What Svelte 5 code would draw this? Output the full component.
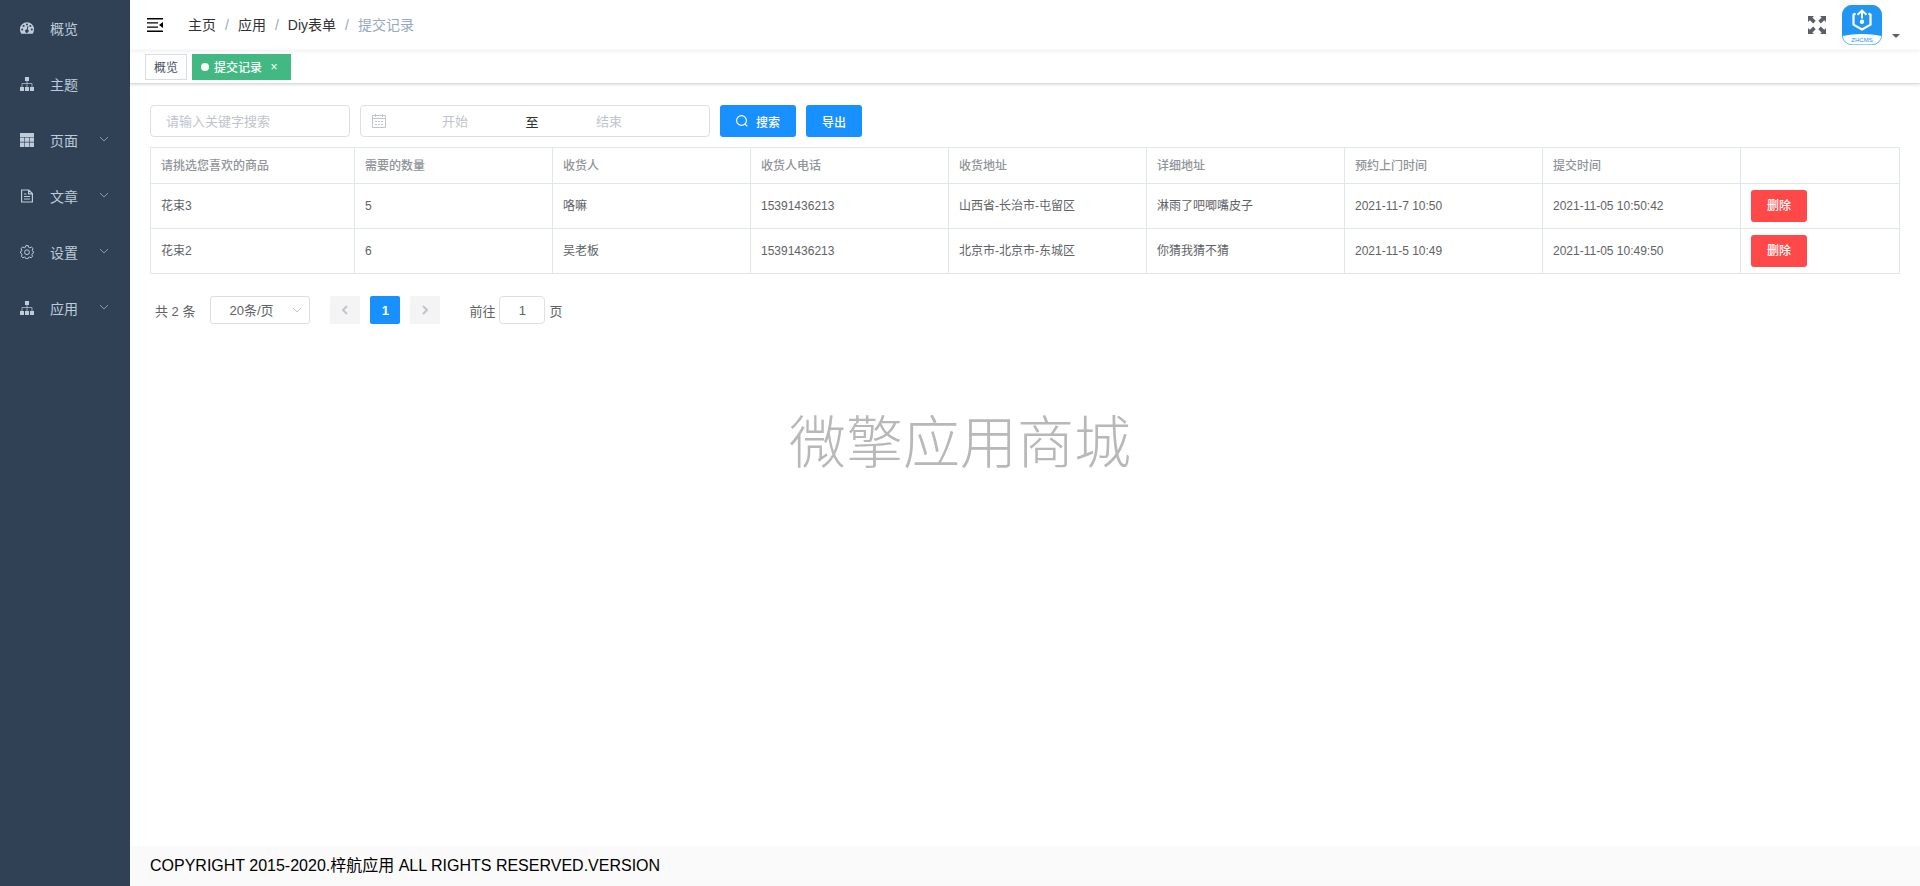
<script>
  let menus = [
    { name: "概览", icon: "dashboard", sub: false },
    { name: "主题", icon: "tree", sub: false },
    { name: "页面", icon: "grid", sub: true },
    { name: "文章", icon: "doc", sub: true },
    { name: "设置", icon: "gear", sub: true },
    { name: "应用", icon: "tree", sub: true }
  ];

  let crumbs = ["主页", "应用", "Diy表单"];

  let columns = [
    "请挑选您喜欢的商品",
    "需要的数量",
    "收货人",
    "收货人电话",
    "收货地址",
    "详细地址",
    "预约上门时间",
    "提交时间"
  ];

  let rows = [
    ["花束3", "5", "咯嘛", "15391436213", "山西省-长治市-屯留区", "淋雨了吧唧嘴皮子", "2021-11-7 10:50", "2021-11-05 10:50:42"],
    ["花束2", "6", "吴老板", "15391436213", "北京市-北京市-东城区", "你猜我猜不猜", "2021-11-5 10:49", "2021-11-05 10:49:50"]
  ];

  let keyword = "";
  let start = "";
  let end = "";
  let pageSize = "20";
  let page = "1";

  const remove = i => {
    rows = rows.filter((_, index) => index !== i);
  };
</script>

<div class="app">
  <aside class="sidebar">
    <nav>
      <ul>
        {#each menus as menu}
          <li>
            <a href="#/">
              <svg class="menu-icon" viewBox="0 0 14 14" aria-hidden="true">
                {#if menu.icon === "dashboard"}
                  <path fill="currentColor" d="M7 1.200a7 7 0 0 0-7 7c0 1.600.5 3 1.200 4.200.2.2.4.4.7.4h10.200c.3 0 .5-.2.7-.4A7.600 7.600 0 0 0 14 8.200a7 7 0 0 0-7-7z" />
                  <g fill="#304156">
                    <circle cx="7" cy="3.500" r="1" />
                    <circle cx="3.600" cy="5" r="1" />
                    <circle cx="10.400" cy="5" r="1" />
                    <circle cx="2.200" cy="8.400" r="1" />
                    <circle cx="11.800" cy="8.400" r="1" />
                    <path d="M7.500 5l.9.300-.7 3.300a1.700 1.700 0 1 1-1-.2z" />
                  </g>
                {:else if menu.icon === "tree"}
                  <path fill="currentColor" d="M5 0h4v4H5zM0 10h4v4H0zM5 10h4v4H5zM10 10h4v4h-4z" />
                  <path fill="none" stroke="currentColor" stroke-opacity=".7" d="M7 4v6M2 10V6.500h10V10" />
                {:else if menu.icon === "grid"}
                  <path fill="currentColor" d="M0 0h14v4H0zM0 4.600h4.400v4.200H0zM5 4.600h4v4.200H5zM9.600 4.600H14v4.200H9.600zM0 9.400h4.400V14H0zM5 9.400h4V14H5zM9.600 9.400H14V14H9.600z" />
                {:else if menu.icon === "doc"}
                  <path fill="none" stroke="currentColor" stroke-width="1.200" d="M1.600 1h7.200l3.600 3.600V13H1.600zM8.600 1v3.800h3.800M4 7.500h6M4 10h6M4 5h2.500" />
                {:else}
                  <path fill="none" stroke="currentColor" d="M5.800.6h2.400l.4 1.700 1.300.6 1.500-.9 1.700 1.700-.9 1.500.3 1 .9.300v1.600l-1.100.5-.5 1.300.8 1.300-1.500 1.600-1.600-.8-1 .4-.4 1.300H5.800l-.4-1.300-1-.4-1.600.8-1.500-1.600.8-1.300-.5-1.300-1-.5V6.500l.9-.3.300-1-.9-1.500L2.600 2l1.500.9 1.300-.6z" />
                  <circle cx="7" cy="7.200" r="2.400" fill="none" stroke="currentColor" />
                {/if}
              </svg>
              <span>{menu.name}</span>
              {#if menu.sub}
                <svg class="arrow" viewBox="0 0 10 10" aria-hidden="true">
                  <path d="M1 2l4 4 4-4" />
                </svg>
              {/if}
            </a>
          </li>
        {/each}
      </ul>
    </nav>
  </aside>

  <div class="main">
    <header class="navbar">
      <button class="plain" aria-label="收起菜单">
        <svg width="16" height="14" viewBox="0 0 16 14">
          <path fill="#000" d="M0 0h16v1.400H0zM0 4.200h11v1.400H0zM0 8.400h11v1.400H0zM0 12.600h16V14H0zM16 4v6l-4-3z" />
        </svg>
      </button>
      <ol class="breadcrumb">
        {#each crumbs as crumb}
          <li><a href="#/">{crumb}</a><i>/</i></li>
        {/each}
        <li class="current">提交记录</li>
      </ol>
      <div class="right-menu">
        <button class="plain" aria-label="全屏">
          <svg width="18" height="18" viewBox="0 0 18 18">
            <g fill="#5a5e66">
              <path d="M0 0h6L4.400 1.600l3.300 3.200-2.500 2.600-3.400-3.200L0 6z" />
              <path transform="matrix(-1 0 0 1 18 0)" d="M0 0h6L4.400 1.600l3.300 3.200-2.500 2.600-3.400-3.200L0 6z" />
              <path transform="matrix(1 0 0 -1 0 18)" d="M0 0h6L4.400 1.600l3.300 3.200-2.500 2.600-3.400-3.200L0 6z" />
              <path transform="rotate(180 9 9)" d="M0 0h6L4.400 1.600l3.300 3.200-2.500 2.600-3.400-3.200L0 6z" />
            </g>
          </svg>
        </button>
        <button class="plain user" aria-label="用户菜单">
          <svg width="40" height="40" viewBox="0 0 40 40">
            <clipPath id="avatar"><rect width="40" height="40" rx="10" /></clipPath>
            <g clip-path="url(#avatar)">
              <path fill="#2196f3" d="M0 0h40v40H0z" />
              <path fill="#fff" d="M0 31q20-4 40 0V40H0z" />
            </g>
            <rect x=".3" y=".3" width="39.400" height="39.400" rx="9.700" fill="none" stroke="#2196f3" stroke-width=".6" />
            <g fill="none" stroke="#fff" stroke-width="2.200">
              <path d="M13.500 8.500l-2 1.200v10l8.500 4.700 8.500-4.700v-10l-2-1.200" />
              <path stroke-width="2" d="M20 13.500V6M15.500 9.800L20 5.600l4.500 4.200" />
            </g>
            <circle cx="20" cy="16.800" r="2.200" fill="#fff" />
            <text x="20" y="37" text-anchor="middle" font-size="6" fill="#2196f3">ZHCMS</text>
          </svg>
          <svg class="caret" width="8" height="4" viewBox="0 0 8 4"><path fill="#5a5e66" d="M0 0h8L4 4z" /></svg>
        </button>
      </div>
    </header>

    <div class="tags">
      <a class="tag" href="#/">概览</a>
      <a class="tag active" href="#/">
        <span class="dot"></span>提交记录<span class="close">×</span>
      </a>
    </div>

    <section class="content">
      <form class="filter" on:submit|preventDefault>
        <input class="keyword" type="text" aria-label="关键字" placeholder="请输入关键字搜索" bind:value={keyword} />
        <div class="range">
          <svg width="14" height="14" viewBox="0 0 14 14" aria-hidden="true">
            <path fill="none" stroke="#c0c4cc" d="M.5 1.500h13v12H.5zM.5 4.500h13M3.500 0v3M10.500 0v3M3 7.500h2M6 7.500h2M9 7.500h2M3 10.500h2M6 10.500h2M9 10.500h2" />
          </svg>
          <input type="text" aria-label="开始" placeholder="开始" bind:value={start} />
          <span>至</span>
          <input type="text" aria-label="结束" placeholder="结束" bind:value={end} />
        </div>
        <button class="btn" type="submit">
          <svg width="12" height="12" viewBox="0 0 12 12" aria-hidden="true">
            <path fill="none" stroke="#fff" stroke-width="1.100" d="M10.400 5.500a4.900 4.900 0 1 1-9.800 0 4.900 4.900 0 0 1 9.800 0zM9 9l2.300 2.300" />
          </svg>
          搜索
        </button>
        <button class="btn" type="button">导出</button>
      </form>

      <table>
        <colgroup>
          <col class="first" />
          {#each columns.slice(1) as _}
            <col />
          {/each}
          <col class="last" />
        </colgroup>
        <thead>
          <tr>
            {#each columns as column}
              <th>{column}</th>
            {/each}
            <th></th>
          </tr>
        </thead>
        <tbody>
          {#each rows as row, i}
            <tr>
              {#each row as cell}
                <td>{cell}</td>
              {/each}
              <td><button class="btn danger" on:click={() => remove(i)}>删除</button></td>
            </tr>
          {/each}
        </tbody>
      </table>

      <div class="pagination">
        <span>共 2 条</span>
        <div class="sizes">
          <select aria-label="每页条数" bind:value={pageSize}>
            <option value="20">20条/页</option>
            <option value="50">50条/页</option>
          </select>
          <svg class="arrow" viewBox="0 0 10 10" aria-hidden="true"><path d="M1 3l4 4 4-4" /></svg>
        </div>
        <div class="pager">
          <button disabled aria-label="上一页">
            <svg width="10" height="10" viewBox="0 0 10 10"><path d="M7 1L3 5l4 4" /></svg>
          </button>
          <button class="active">1</button>
          <button disabled aria-label="下一页">
            <svg width="10" height="10" viewBox="0 0 10 10"><path d="M3 1l4 4-4 4" /></svg>
          </button>
        </div>
        <label class="jump">前往<input type="text" bind:value={page} />页</label>
      </div>
    </section>

    <footer>COPYRIGHT 2015-2020.梓航应用 ALL RIGHTS RESERVED.VERSION</footer>
  </div>

  <div class="watermark">微擎应用商城</div>
</div>

<style>
  :global(body) {
    margin: 0;
    background: #fff;
  }

  .app {
    display: flex;
    min-height: 100vh;
    font-family: "Liberation Sans", "Noto Sans CJK SC", sans-serif;
    font-size: 13px;
    color: #606266;
  }

  .app * {
    box-sizing: border-box;
  }

  button,
  input,
  select {
    font: inherit;
    color: inherit;
    margin: 0;
  }

  button {
    cursor: pointer;
  }

  a {
    color: inherit;
    text-decoration: none;
  }

  ul,
  ol {
    list-style: none;
    margin: 0;
    padding: 0;
  }

  svg {
    flex: none;
  }

  .sidebar {
    flex: none;
    width: 130px;
    background: #304156;
    color: #bfcbd9;
    font-size: 14px;
  }

  .sidebar a {
    display: flex;
    align-items: center;
    height: 56px;
    padding: 0 21px 0 20px;
  }

  .menu-icon {
    width: 14px;
    height: 14px;
    margin-right: 16px;
  }

  .arrow {
    width: 10px;
    height: 10px;
    fill: none;
    stroke: #909399;
  }

  .sidebar .arrow {
    margin-left: auto;
  }

  .main {
    flex: 1;
    min-width: 0;
    display: flex;
    flex-direction: column;
  }

  .navbar {
    display: flex;
    align-items: center;
    height: 50px;
    padding: 0 20px 0 17px;
    box-shadow: 0 1px 4px rgba(0, 21, 41, 0.08);
  }

  .plain {
    display: flex;
    padding: 0;
    border: 0;
    background: none;
  }

  .breadcrumb {
    display: flex;
    margin-left: 25px;
    font-size: 14px;
    line-height: 20px;
    color: #303133;
  }

  .breadcrumb i {
    margin: 0 9px;
    font-style: normal;
    color: #97a8be;
  }

  .breadcrumb .current {
    color: #97a8be;
  }

  .right-menu {
    display: flex;
    align-items: center;
    gap: 16px;
    margin-left: auto;
  }

  .user {
    align-items: flex-end;
    gap: 10px;
  }

  .caret {
    margin-bottom: 7px;
  }

  .tags {
    display: flex;
    align-items: center;
    gap: 5px;
    height: 34px;
    padding: 0 15px;
    border-bottom: 1px solid #d8dce5;
    box-shadow: 0 1px 3px rgba(0, 0, 0, 0.12);
    font-size: 12px;
    color: #495060;
  }

  .tag {
    display: flex;
    align-items: center;
    height: 26px;
    padding: 0 8px;
    border: 1px solid #d8dce5;
  }

  .tag.active {
    background: #42b983;
    border-color: #42b983;
    color: #fff;
    font-weight: 500;
  }

  .dot {
    width: 8px;
    height: 8px;
    margin-right: 5px;
    border-radius: 50%;
    background: #fff;
  }

  .close {
    width: 16px;
    margin-left: 4px;
    text-align: center;
  }

  .content {
    flex: 1;
    padding: 21px 20px;
  }

  .filter {
    display: flex;
    align-items: center;
    gap: 10px;
    margin-bottom: 10px;
  }

  .filter .keyword,
  .range {
    height: 32px;
    border: 1px solid #dcdfe6;
    border-radius: 4px;
    background: #fff;
  }

  .filter .keyword {
    width: 200px;
    padding: 0 15px;
  }

  .range {
    display: flex;
    align-items: center;
    width: 350px;
    padding: 0 11px;
  }

  .range svg {
    margin-right: 5px;
  }

  .range input {
    width: 128px;
    border: 0;
    padding: 0;
    text-align: center;
    background: none;
  }

  .range span {
    width: 26px;
    text-align: center;
    color: #303133;
  }

  input::placeholder {
    color: #c0c4cc;
    opacity: 1;
  }

  .btn {
    display: inline-flex;
    align-items: center;
    gap: 8px;
    height: 32px;
    padding: 0 16px;
    border: 0;
    border-radius: 3px;
    background: #1890ff;
    color: #fff;
    font-size: 12px;
    font-weight: 500;
  }

  .btn.danger {
    background: #ff4949;
  }

  table {
    width: 100%;
    table-layout: fixed;
    border-spacing: 0;
    border-top: 1px solid #dfe6ec;
    border-left: 1px solid #dfe6ec;
    font-size: 12px;
    line-height: 20px;
  }

  .first {
    width: 204px;
  }

  .last {
    width: 159px;
  }

  th,
  td {
    padding: 0 10px;
    border-right: 1px solid #dfe6ec;
    border-bottom: 1px solid #dfe6ec;
    text-align: left;
  }

  th {
    height: 36px;
    color: #909399;
    font-weight: 500;
  }

  td {
    height: 45px;
  }

  td .btn {
    vertical-align: middle;
  }

  .pagination {
    display: flex;
    align-items: center;
    margin-top: 22px;
    padding: 0 5px;
  }

  .sizes {
    position: relative;
    margin: 0 20px 0 15px;
  }

  .sizes select {
    display: block;
    width: 100px;
    height: 28px;
    padding: 0 18px;
    border: 1px solid #dcdfe6;
    border-radius: 3px;
    background: #fff;
    appearance: none;
  }

  .sizes .arrow {
    position: absolute;
    top: 9px;
    right: 8px;
    stroke: #c0c4cc;
    pointer-events: none;
  }

  .pager {
    display: flex;
    gap: 10px;
  }

  .pager button {
    display: flex;
    align-items: center;
    justify-content: center;
    width: 30px;
    height: 28px;
    padding: 0;
    border: 0;
    border-radius: 2px;
    background: #f4f4f5;
    font-weight: 700;
  }

  .pager path {
    fill: none;
    stroke: #c0c4cc;
    stroke-width: 2;
  }

  .pager .active {
    background: #1890ff;
    color: #fff;
  }

  .jump {
    display: flex;
    align-items: center;
    gap: 4px;
    margin-left: 29px;
  }

  .jump input {
    width: 46px;
    height: 28px;
    padding: 0 3px;
    border: 1px solid #dcdfe6;
    border-radius: 4px;
    text-align: center;
  }

  footer {
    height: 40px;
    padding: 0 20px;
    background: #fafafa;
    color: #000;
    font-size: 16px;
    line-height: 40px;
  }

  .watermark {
    position: fixed;
    inset: 0;
    display: grid;
    place-items: center;
    padding-bottom: 10px;
    font-size: 57px;
    font-weight: 300;
    color: #b8b8b8;
    pointer-events: none;
  }
</style>
